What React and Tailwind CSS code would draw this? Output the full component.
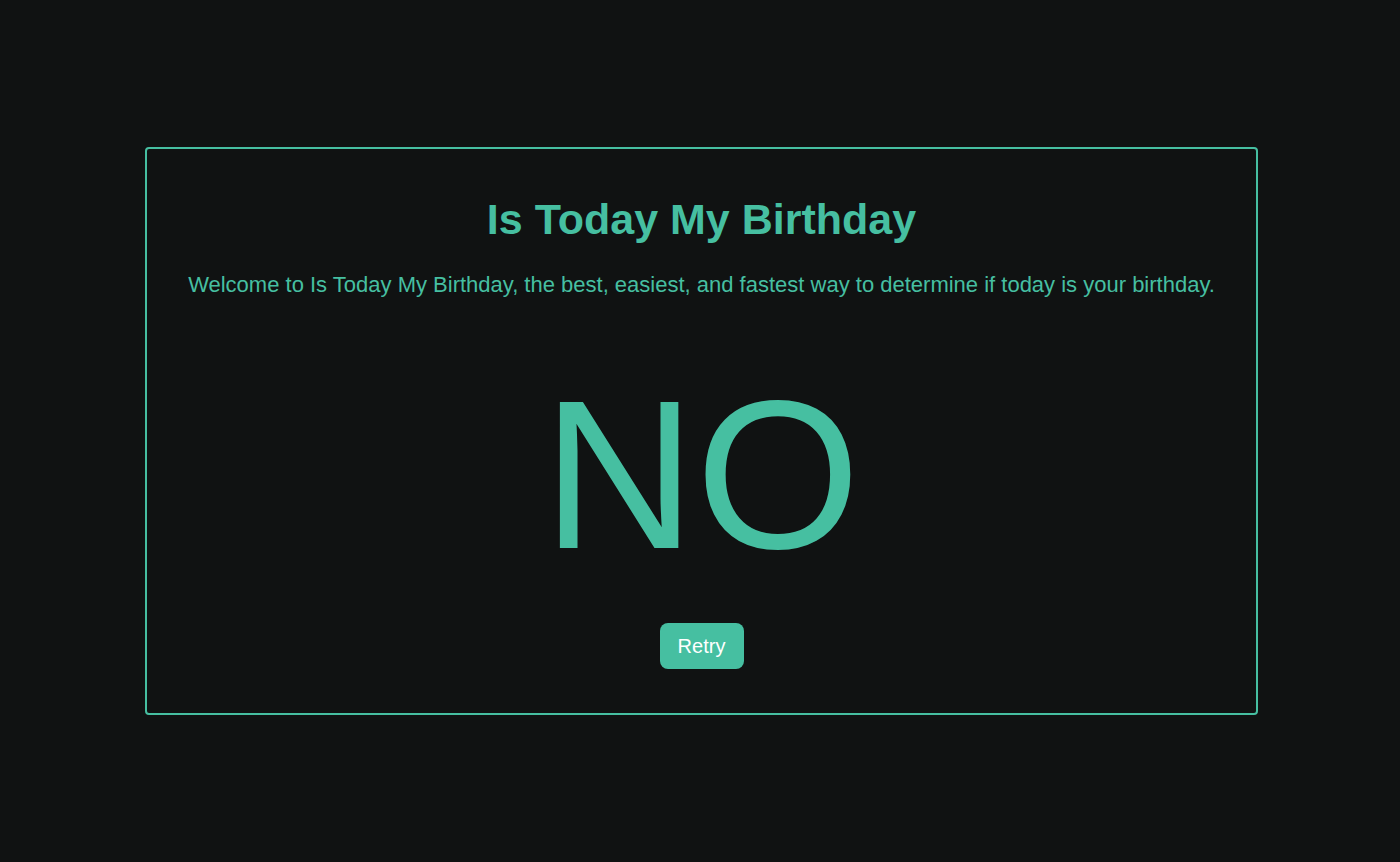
export default function App() {
  return (
    <div
      className="w-full h-[862px] bg-[#101212] flex items-center justify-center"
      style={{ fontFamily: '"Liberation Sans", Arial, sans-serif' }}
    >
      <div className="w-[1113px] h-[568px] ml-[3px] border-2 border-[#46bfa1] rounded-[4px] flex flex-col items-center pt-[46px]">
        <h1 className="text-[43px] leading-[49px] font-bold text-[#46bfa1]">Is Today My Birthday</h1>
        <p className="mt-[28px] text-[22px] leading-[25px] text-[#46bfa1] whitespace-nowrap">
          Welcome to Is Today My Birthday, the best, easiest, and fastest way to determine if today is your birthday.
        </p>
        <div className="mt-[56px] text-[212px] leading-[244px] text-[#46bfa1]">NO</div>
        <button className="mt-[26px] h-[46px] w-[84px] rounded-[8px] bg-[#46bfa1] text-white text-[20px] flex items-center justify-center">
          Retry
        </button>
      </div>
    </div>
  );
}
